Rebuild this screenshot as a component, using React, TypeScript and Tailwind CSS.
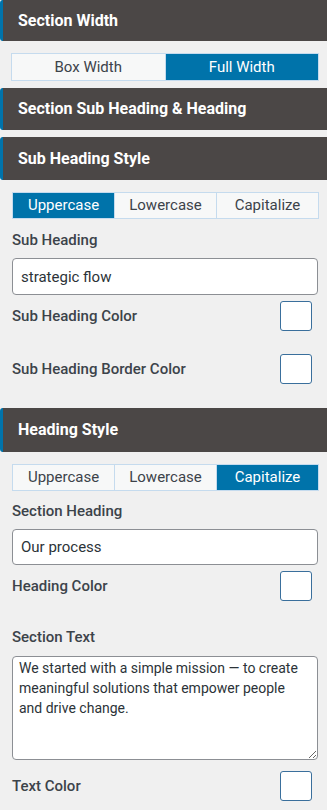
import { useState } from 'react';

const font = { fontFamily: 'Roboto, "Liberation Sans", sans-serif' };

function PanelHeader({ title, className = '' }: { title: string; className?: string }) {
  return (
    <div
      className={`flex items-center bg-[#4b4746] border-l-[3px] border-[#0073aa] rounded-l-[3px] pl-[15px] text-[16px] font-bold text-white ${className}`}
    >
      {title}
    </div>
  );
}

function Toggle({
  options,
  active,
  onChange,
  className = '',
}: {
  options: string[];
  active: string;
  onChange: (v: string) => void;
  className?: string;
}) {
  return (
    <div className={`flex border border-[#c5dbee] ${className}`}>
      {options.map((opt, i) => (
        <button
          key={opt}
          onClick={() => onChange(opt)}
          className={`flex-1 text-[15px] leading-none ${i > 0 ? 'border-l border-[#c5dbee]' : ''} ${
            active === opt ? 'bg-[#0073aa] text-white' : 'bg-[#f7f8f8] text-[#3c434a]'
          }`}
        >
          {opt}
        </button>
      ))}
    </div>
  );
}

function Label({ children, className = '' }: { children: string; className?: string }) {
  return <div className={`text-[15px] leading-5 font-medium text-[#3c434a] ${className}`}>{children}</div>;
}

function ColorRow({ label, className = '' }: { label: string; className?: string }) {
  return (
    <div className={`flex items-center justify-between pr-[7px] ${className}`}>
      <Label>{label}</Label>
      <div className="w-[32px] h-[30px] rounded-[3px] border border-[#3a6f9c] bg-white" />
    </div>
  );
}

export default function App() {
  const [width, setWidth] = useState('Full Width');
  const [subCase, setSubCase] = useState('Uppercase');
  const [headCase, setHeadCase] = useState('Capitalize');

  return (
    <div className="w-[327px] min-h-[810px] bg-[#f0f0f0] overflow-hidden" style={font}>
      {/* Section Width */}
      <PanelHeader title="Section Width" className="h-[41px]" />
      <div className="px-[11px] pt-[12px] pb-[7px]">
        <Toggle
          options={['Box Width', 'Full Width']}
          active={width}
          onChange={setWidth}
          className="h-[28px] mr-[-3px]"
        />
      </div>

      {/* Sub heading & heading */}
      <PanelHeader title="Section Sub Heading & Heading" className="h-[42px] mb-[7px]" />
      <PanelHeader title="Sub Heading Style" className="h-[43px]" />
      <div className="pl-[12px] pr-[8px] pt-[12px]">
        <Toggle
          options={['Uppercase', 'Lowercase', 'Capitalize']}
          active={subCase}
          onChange={setSubCase}
          className="h-[27px]"
        />
        <Label className="mt-[11px]">Sub Heading</Label>
        <input
          defaultValue="strategic flow"
          className="mt-[8px] w-[306px] h-[37px] rounded-[4px] border border-[#8c8f94] bg-white px-[8px] text-[15px] text-[#2c3338] outline-none"
        />
        <ColorRow label="Sub Heading Color" className="mt-[6px] h-[30px]" />
        <ColorRow label="Sub Heading Border Color" className="mt-[23px] h-[30px]" />
      </div>

      {/* Heading Style */}
      <PanelHeader title="Heading Style" className="h-[44px] mt-[24px]" />
      <div className="pl-[12px] pr-[8px] pt-[12px]">
        <Toggle
          options={['Uppercase', 'Lowercase', 'Capitalize']}
          active={headCase}
          onChange={setHeadCase}
          className="h-[27px]"
        />
        <Label className="mt-[10px]">Section Heading</Label>
        <input
          defaultValue="Our process"
          className="mt-[8px] w-[306px] h-[36px] rounded-[4px] border border-[#8c8f94] bg-white px-[8px] text-[15px] text-[#2c3338] outline-none"
        />
        <ColorRow label="Heading Color" className="mt-[6px] h-[30px]" />
        <Label className="mt-[26px]">Section Text</Label>
        <textarea
          defaultValue="We started with a simple mission — to create meaningful solutions that empower people and drive change."
          className="block mt-[9px] w-[306px] h-[104px] rounded-[4px] border border-[#8c8f94] bg-white px-[6px] py-[1px] text-[14px] leading-[20px] text-[#2c3338] outline-none"
        />
        <ColorRow label="Text Color" className="mt-[11px] h-[30px]" />
      </div>
    </div>
  );
}
